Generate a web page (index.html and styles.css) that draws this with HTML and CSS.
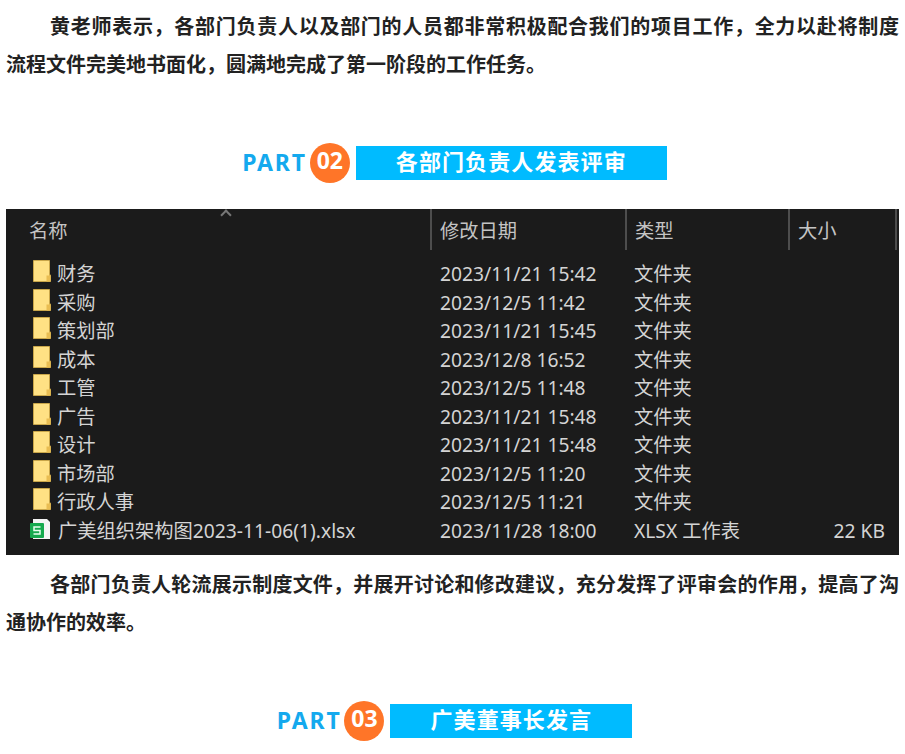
FILE: index.html
```html
<!DOCTYPE html>
<html lang="zh-CN">
<head>
<meta charset="utf-8">
<title>广美</title>
<link rel="stylesheet" href="styles.css">
</head>
<body>
<svg class="defs" width="0" height="0" aria-hidden="true">
  <symbol id="folder" viewBox="0 0 18 22">
    <path d="M.5.5h16v15h1v6H.5z" fill="#ffe184" stroke="#c9a64a" stroke-width="1"/>
    <path d="M13.500 21.500v-6h3v-1h1v7z" fill="#e9bd52"/>
  </symbol>
  <symbol id="sheet" viewBox="0 0 20 20">
    <path d="M3 0h14l3 3v17H3z" fill="#f4f4f4"/>
    <rect x="0" y="4" width="14" height="15" rx="1" fill="#16a94e"/>
    <path d="M10.500 8H4v3.500H10V15H3.500" fill="none" stroke="#e9fff0" stroke-width="1.500"/>
  </symbol>
</svg>
<main class="page">
  <p class="para"><span class="line-full">黄老师表示，各部门负责人以及部门的人员都非常积极配合我们的项目工作，全力以赴将制度</span>流程文件完美地书面化，圆满地完成了第一阶段的工作任务。</p>

  <h2 class="part part-two">
    <span class="part-label">PART</span>
    <span class="part-num">02</span>
    <span class="part-title">各部门负责人发表评审</span>
  </h2>

  <section class="explorer">
    <div class="ex-head">
      <span class="chevron"></span>
      <div class="ex-col col-name">名称</div>
      <div class="ex-col col-date">修改日期</div>
      <div class="ex-col col-type">类型</div>
      <div class="ex-col col-size">大小</div>
    </div>
    <div class="ex-rows">
      <div class="ex-row"><span class="col-name cell-name"><svg class="ico"><use href="#folder"/></svg>财务</span><span class="col-date">2023/11/21 15:42</span><span class="col-type">文件夹</span></div>
      <div class="ex-row"><span class="col-name cell-name"><svg class="ico"><use href="#folder"/></svg>采购</span><span class="col-date">2023/12/5 11:42</span><span class="col-type">文件夹</span></div>
      <div class="ex-row"><span class="col-name cell-name"><svg class="ico"><use href="#folder"/></svg>策划部</span><span class="col-date">2023/11/21 15:45</span><span class="col-type">文件夹</span></div>
      <div class="ex-row"><span class="col-name cell-name"><svg class="ico"><use href="#folder"/></svg>成本</span><span class="col-date">2023/12/8 16:52</span><span class="col-type">文件夹</span></div>
      <div class="ex-row"><span class="col-name cell-name"><svg class="ico"><use href="#folder"/></svg>工管</span><span class="col-date">2023/12/5 11:48</span><span class="col-type">文件夹</span></div>
      <div class="ex-row"><span class="col-name cell-name"><svg class="ico"><use href="#folder"/></svg>广告</span><span class="col-date">2023/11/21 15:48</span><span class="col-type">文件夹</span></div>
      <div class="ex-row"><span class="col-name cell-name"><svg class="ico"><use href="#folder"/></svg>设计</span><span class="col-date">2023/11/21 15:48</span><span class="col-type">文件夹</span></div>
      <div class="ex-row"><span class="col-name cell-name"><svg class="ico"><use href="#folder"/></svg>市场部</span><span class="col-date">2023/12/5 11:20</span><span class="col-type">文件夹</span></div>
      <div class="ex-row"><span class="col-name cell-name"><svg class="ico"><use href="#folder"/></svg>行政人事</span><span class="col-date">2023/12/5 11:21</span><span class="col-type">文件夹</span></div>
      <div class="ex-row"><span class="col-name cell-name"><svg class="ico ico-sheet"><use href="#sheet"/></svg>广美组织架构图2023-11-06(1).xlsx</span><span class="col-date">2023/11/28 18:00</span><span class="col-type">XLSX 工作表</span><span class="col-size cell-size">22 KB</span></div>
    </div>
  </section>

  <p class="para para-after"><span class="line-full">各部门负责人轮流展示制度文件，并展开讨论和修改建议，充分发挥了评审会的作用，提高了沟</span>通协作的效率。</p>

  <h2 class="part part-three">
    <span class="part-label">PART</span>
    <span class="part-num">03</span>
    <span class="part-title">广美董事长发言</span>
  </h2>
</main>
</body>
</html>
```
FILE: styles.css
```css
* { box-sizing: border-box; }
html, body { margin: 0; padding: 0; }
body {
  background: #fff;
  font-family: "Noto Sans", "Noto Sans CJK SC", sans-serif;
  overflow: hidden;
}
.defs { display: block; height: 0; }
.page { width: 905px; padding: 7px 6px 0; }

.para {
  margin: 0;
  font-family: "Noto Sans CJK SC", sans-serif;
  font-size: 20px;
  font-weight: 700;
  line-height: 38px;
  color: #222;
}
.line-full {
  display: block;
  padding-left: 44px;
  text-align: justify;
  text-align-last: justify;
}
.para-after { margin-top: 10px; }

.part {
  display: flex;
  align-items: center;
  justify-content: center;
  margin: 0;
  padding-left: 4px;
  font-weight: 700;
}
.part-two { margin-top: 60px; margin-bottom: 26px; }
.part-three { margin-top: 60px; }
.part-label {
  font-family: "Noto Sans", sans-serif;
  font-size: 23px;
  line-height: 30px;
  padding-bottom: 3px;
  font-weight: 700;
  letter-spacing: 1.800px;
  color: #14a9ee;
  margin-right: 3px;
}
.part-num {
  display: flex;
  align-items: center;
  justify-content: center;
  width: 40px;
  height: 40px;
  padding-bottom: 6px;
  border-radius: 50%;
  background: #ff7528;
  color: #fff;
  font-family: "Noto Sans", sans-serif;
  font-size: 23px;
  font-weight: 700;
}
.part-title {
  display: block;
  margin-left: 6px;
  padding: 0 40px 0 40px;
  height: 34px;
  line-height: 29px;
  background: #00bbff;
  color: #fff;
  font-family: "Noto Sans CJK SC", sans-serif;
  font-size: 22px;
  font-weight: 700;
  letter-spacing: 1.100px;
  white-space: nowrap;
}

.explorer {
  height: 346px;
  background: #1b1b1b;
  color: #d4d4d4;
  font-size: 19.250px;
  line-height: 28.500px;
}
.ex-head, .ex-row {
  display: grid;
  grid-template-columns: 426px 195px 163px 107px;
}
.ex-head { position: relative; height: 41px; }
.chevron {
  position: absolute;
  left: 216px;
  top: 2px;
  width: 8px;
  height: 8px;
  border-left: 2px solid #777;
  border-top: 2px solid #777;
  transform: rotate(45deg);
}
.ex-col {
  padding: 8px 0 0 8px;
  border-right: 2px solid #4d4d4d;
  color: #c4c4c4;
}
.ex-col.col-name { padding-left: 23px; }
.ex-rows { padding-top: 10px; }
.ex-row { height: 28.500px; }
.ex-row > span { white-space: nowrap; }
.ex-row .col-date { padding-left: 8px; }
.ex-row .col-type { padding-left: 7px; }
.cell-name {
  display: flex;
  align-items: center;
  padding-left: 27px;
}
.ico {
  flex: none;
  width: 18px;
  height: 22px;
  margin-right: 6px;
  margin-top: -6px;
}
.ico-sheet { width: 20px; height: 20px; margin-left: -3px; margin-right: 8px; margin-top: -4px; }
.cell-size {
  grid-column: 4;
  padding-right: 12px;
  text-align: right;
}
```
